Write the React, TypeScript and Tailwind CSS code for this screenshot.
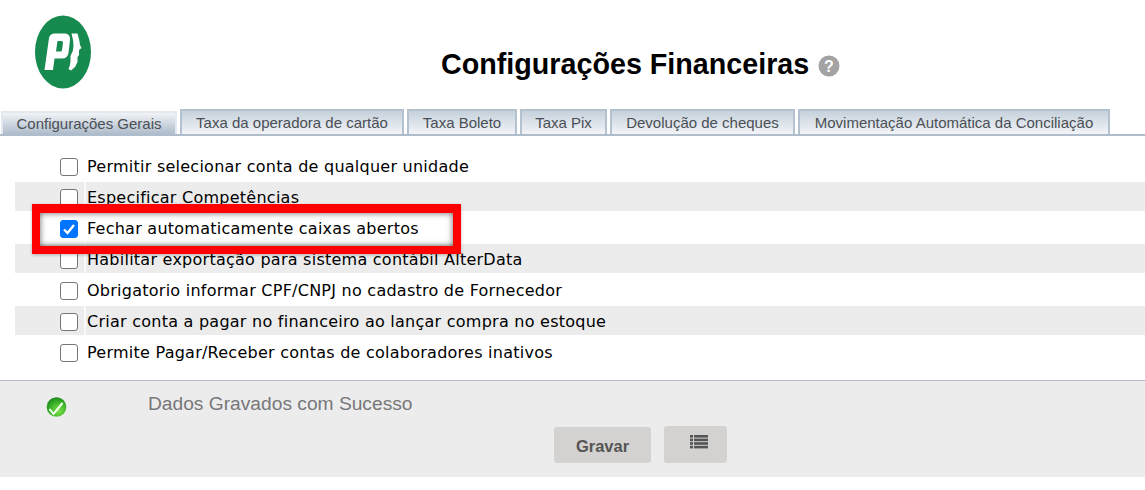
const tabs = [
  { label: 'Taxa da operadora de cartão', width: 'w-[224px]' },
  { label: 'Taxa Boleto', width: 'w-[110px]' },
  { label: 'Taxa Pix', width: 'w-[87px]' },
  { label: 'Devolução de cheques', width: 'w-[185px]' },
  { label: 'Movimentação Automática da Conciliação', width: 'w-[312px]' },
];

const options = [
  { label: 'Permitir selecionar conta de qualquer unidade', checked: false },
  { label: 'Especificar Competências', checked: false },
  { label: 'Fechar automaticamente caixas abertos', checked: true },
  { label: 'Habilitar exportação para sistema contábil AlterData', checked: false },
  { label: 'Obrigatorio informar CPF/CNPJ no cadastro de Fornecedor', checked: false },
  { label: 'Criar conta a pagar no financeiro ao lançar compra no estoque', checked: false },
  { label: 'Permite Pagar/Receber contas de colaboradores inativos', checked: false },
];

const Logo = () => (
  <svg width="58" height="74" viewBox="0 0 58 74">
    <ellipse cx="29" cy="37" rx="28" ry="36.500" fill="#178a50" />
    <path
      fillRule="evenodd"
      d="M10.500 55 L15 23 Q16 18.500 21 18.500 L31 18.500 Q36.500 19 36 25 L34.500 38 Q33.500 43.500 28 43.500 L20.500 43.500 L19 55 Z M23.500 26 L22 36.500 L26.500 36.500 Q27.800 36.500 28 35 L29 28 Q29 26 27.500 26 Z"
      fill="#fff"
    />
    <path
      d="M37.500 18.500 L43.500 18.500 Q45.500 25 46 30 L47.500 33 L45 35 L45 40 L43.500 42 L43.500 47 L41 52 L37 55.500 L34.500 54 Q36.500 50 36.500 46 L36.500 41 Q39.500 36 39.500 31 Q39.500 25 37.500 18.500 Z"
      fill="#fff"
    />
  </svg>
);

const App = () => {
  return (
    <div className="relative w-[1145px] h-[490px] overflow-hidden bg-white font-['Liberation_Sans',sans-serif]">
      <div className="flex h-[109px]">
        <div className="pl-[34px] pt-[15px] w-[441px]">
          <Logo />
        </div>
        <div className="flex items-start gap-[9px] pt-[47px]">
          <h1 className="text-[28.700px] leading-[34px] font-bold text-black">Configurações Financeiras</h1>
          <svg className="mt-[8px]" width="22" height="22" viewBox="0 0 22 22">
            <circle cx="11" cy="11" r="10.500" fill="#a3a3a3" />
            <text x="11" y="16.500" textAnchor="middle" fontSize="16" fontWeight="700" fill="#fff">?</text>
          </svg>
        </div>
      </div>

      <div className="flex items-end h-[27px] pl-[1px] border-b-2 border-[#aebccb]">
        <div className="flex items-center justify-center pt-[2px] w-[176px] h-[23px] mr-[3px] border-2 border-b-0 border-[#e3e8ee] bg-gradient-to-b from-[#f1f3f6] to-[#aebccb] text-[15px] text-[#4a4f55]">
          Configurações Gerais
        </div>
        {tabs.map((tab) => (
          <div
            key={tab.label}
            className={`flex items-center justify-center pt-[1px] h-[25px] mr-[3px] border-2 border-b-0 border-[#b4c2d0] bg-gradient-to-b from-[#c6d1dc] to-[#f2f4f7] text-[15px] text-[#4a4f55] whitespace-nowrap ${tab.width}`}
          >
            {tab.label}
          </div>
        ))}
      </div>

      <div className="pt-[13px] pl-[15px] font-['DejaVu_Sans',sans-serif]">
        {options.map((opt, index) => (
          <div key={opt.label} className={`flex ${index % 2 === 1 ? 'h-[29px] bg-[#ececec]' : 'h-[33px]'}`}>
            <div className="flex items-center justify-center pt-[2px] w-[69px] pl-[39px]">
              <span
                className={`flex items-center justify-center w-[18px] h-[18px] rounded-[3px] border ${
                  opt.checked ? 'bg-[#0075ff] border-[#0075ff]' : 'bg-white border-[#767676]'
                }`}
              >
                {opt.checked && (
                  <svg width="14" height="14" viewBox="0 0 14 14">
                    <path d="M2 7.500 L5.500 11 L12 3" fill="none" stroke="#fff" strokeWidth="2.400" />
                  </svg>
                )}
              </span>
            </div>
            <span className={`w-[2px] ${index % 2 === 1 ? 'bg-[#f9f9f9]' : ''}`} />
            <span className="flex items-center pt-[2px] pl-[1px] text-[16px] tracking-[0.25px] text-black whitespace-nowrap">
              {opt.label}
            </span>
          </div>
        ))}
      </div>

      <div className="mt-[12px] h-[97px] border-t border-[#b4bccb] bg-[#ececec]">
        <div className="flex items-start pl-[46px] pt-[12px] h-[45px]">
          <svg className="mt-[4px]" width="21" height="20" viewBox="0 0 21 20">
            <defs>
              <radialGradient id="okGreen" cx="0.6" cy="0.7" r="0.7">
                <stop offset="0" stopColor="#7fe04a" />
                <stop offset="0.6" stopColor="#3fb52a" />
                <stop offset="1" stopColor="#1f8a1c" />
              </radialGradient>
            </defs>
            <circle cx="10.500" cy="10" r="9.800" fill="url(#okGreen)" />
            <path d="M3.500 12 L7.500 17 L16.500 6" fill="none" stroke="#f4fff0" strokeWidth="2" />
          </svg>
          <span className="ml-[81px] text-[19.200px] leading-[22px] text-[#77777a]">Dados Gravados com Sucesso</span>
        </div>
        <div className="flex items-end gap-[13px] pl-[554px]">
          <button className="pt-[3px] w-[97px] h-[36px] rounded-[3px] bg-[#d4d2d0] text-[16.500px] font-bold text-[#555]">Gravar</button>
          <button className="flex justify-center pt-[9px] pl-[6px] w-[63px] h-[37px] rounded-[3px] bg-[#d4d2d0]">
            <svg width="18" height="14" viewBox="0 0 18 14" fill="#555">
              <rect x="0" y="0" width="3" height="2.600" />
              <rect x="4" y="0" width="14" height="2.600" />
              <rect x="0" y="3.600" width="3" height="2.600" />
              <rect x="4" y="3.600" width="14" height="2.600" />
              <rect x="0" y="7.200" width="3" height="2.600" />
              <rect x="4" y="7.200" width="14" height="2.600" />
              <rect x="0" y="10.800" width="3" height="2.600" />
              <rect x="4" y="10.800" width="14" height="2.600" />
            </svg>
          </button>
        </div>
      </div>

      {/* marcação vermelha por cima da linha */}
      <div className="absolute left-[32px] top-[204px] w-[429px] h-[50px] border-[8px] border-t-[9px] border-[#ff0000] shadow-[0_1px_3px_rgba(0,0,0,0.25),inset_0_0_6px_rgba(0,0,0,0.6)]" />
    </div>
  );
};

export default App;
